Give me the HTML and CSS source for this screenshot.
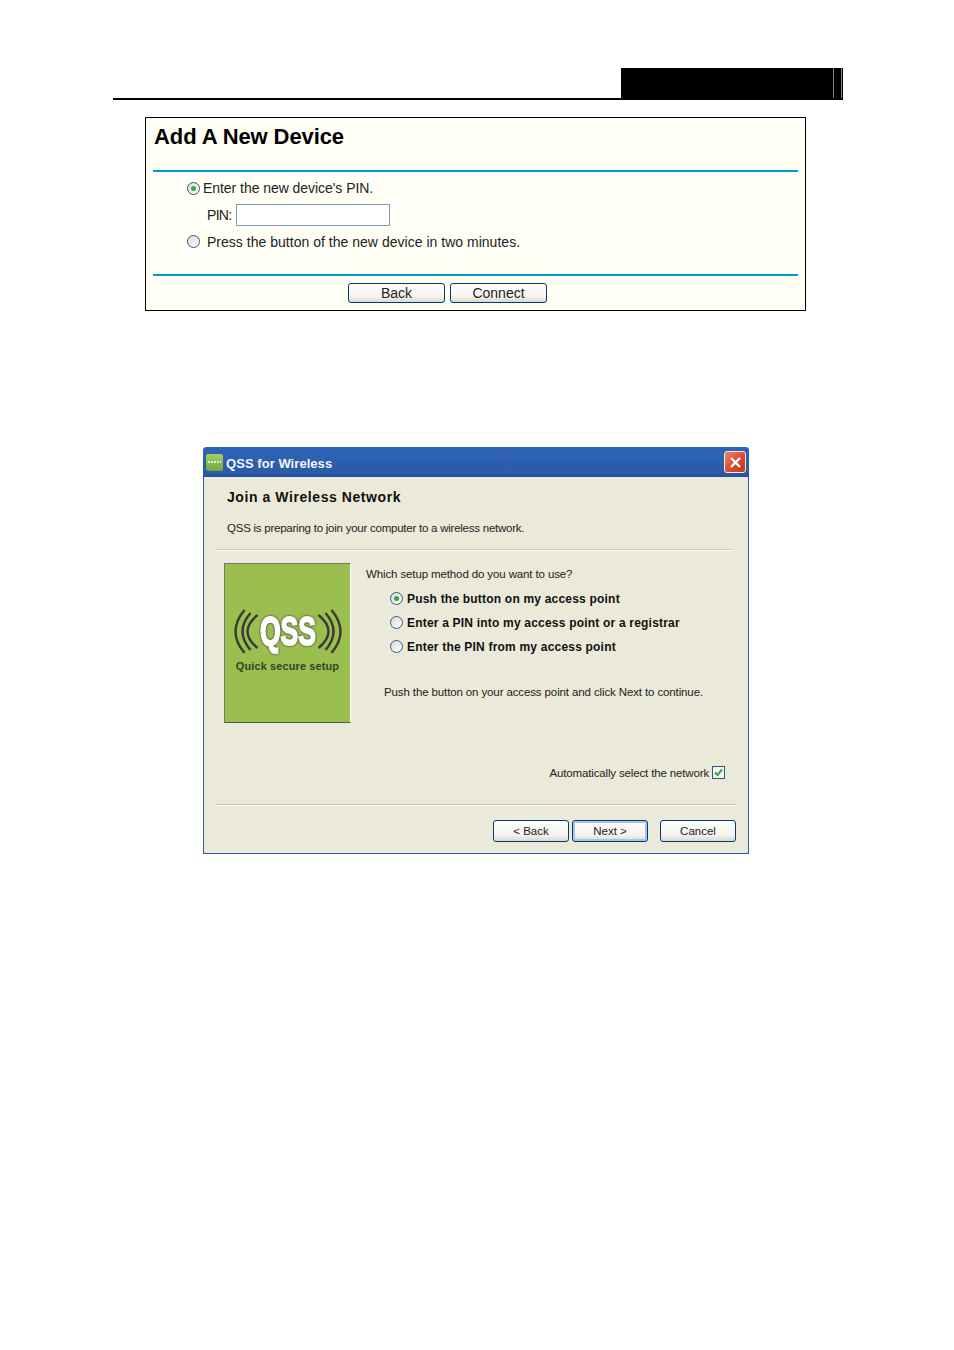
FILE: index.html
```html
<!DOCTYPE html>
<html lang="en">

<head>
    <meta charset="UTF-8">
    <title>Add A New Device</title>
    <link rel="stylesheet" href="styles.css">
</head>

<body>
    <div class="page-head">
        <div class="head-block"></div>
        <div class="head-tick"></div>
        <div class="head-end"></div>
    </div>

    <div class="router-panel">
        <h1>Add A New Device</h1>
        <div class="panel-rule"></div>
        <div class="panel-body">
            <div class="panel-row first">
                <span class="radio on"></span>
                <span class="pin-choice">Enter the new device's PIN.</span>
            </div>
            <div class="panel-row pin-row">
                <span class="pin-label">PIN:</span>
                <span class="pin-input"></span>
            </div>
            <div class="panel-row">
                <span class="radio"></span>
                <span class="press-choice">Press the button of the new device in two minutes.</span>
            </div>
        </div>
        <div class="panel-rule"></div>
        <div class="panel-buttons">
            <span class="web-btn">Back</span>
            <span class="web-btn">Connect</span>
        </div>
    </div>

    <div class="dialog">
        <div class="titlebar">
            <div class="app-icon"><span></span></div>
            <span class="title-text">QSS for Wireless</span>
            <div class="close-btn">
                <svg width="13" height="13" viewBox="0 0 13 13">
                    <path d="M2 2L11 11M11 2L2 11" stroke="#fff" stroke-width="2.4" fill="none"/>
                </svg>
            </div>
        </div>
        <div class="dialog-body">
            <h2>Join a Wireless Network</h2>
            <p class="intro">QSS is preparing to join your computer to a wireless network.</p>
            <div class="rule top-rule"></div>
            <div class="middle">
                <div class="qss-logo">
                    <svg width="124" height="48" viewBox="0 0 124 48">
                        <g fill="none" stroke="#3a3a34" stroke-width="2.4">
                            <path d="M18.5 2Q0.5 23.5 18.5 45"/>
                            <path d="M24.5 5Q8.5 23.5 24.5 42"/>
                            <path d="M31.5 7Q11.5 23.5 31.5 40"/>
                            <path d="M105.5 2Q123.5 23.5 105.5 45"/>
                            <path d="M99.5 5Q115.5 23.5 99.5 42"/>
                            <path d="M92.5 7Q112.5 23.5 92.5 40"/>
                        </g>
                        <text class="qss-word" x="62" y="37" text-anchor="middle" textLength="56" lengthAdjust="spacingAndGlyphs">QSS</text>
                    </svg>
                    <span class="qss-caption">Quick secure setup</span>
                </div>
                <div class="options">
                    <p class="question">Which setup method do you want to use?</p>
                    <div class="option"><span class="radio on"></span><span class="option-text">Push the button on my access point</span></div>
                    <div class="option"><span class="radio"></span><span class="option-text">Enter a PIN into my access point or a registrar</span></div>
                    <div class="option"><span class="radio"></span><span class="option-text">Enter the PIN from my access point</span></div>
                    <p class="hint">Push the button on your access point and click Next to continue.</p>
                </div>
            </div>
            <div class="auto-row">
                <span>Automatically select the network</span>
                <span class="checkbox">
                    <svg width="11" height="11" viewBox="0 0 11 11">
                        <path d="M2 5.5L4.5 8L9 2.5" stroke="#2fa84a" stroke-width="2" fill="none"/>
                    </svg>
                </span>
            </div>
            <div class="rule bottom-rule"></div>
            <div class="dialog-buttons">
                <span class="xp-btn">&lt; Back</span>
                <span class="xp-btn default">Next &gt;</span>
                <span class="xp-btn cancel">Cancel</span>
            </div>
        </div>
    </div>
</body>

</html>
```

FILE: styles.css
```css
html,
body {
    margin: 0;
    padding: 0;
    background-color: #fff;
    color: #000;
    font-family: "Liberation Sans", Arial, sans-serif;
}

body {
    height: 1350px;
    overflow: hidden;
}

/* page header */
.page-head {
    display: flex;
    justify-content: flex-end;
    width: 730px;
    height: 30px;
    margin: 68px 0 0 113px;
    border-bottom: 2px solid #000;
}

.head-block {
    width: 212px;
    border-right: 1px solid #808080;
    background-color: #000;
}

.head-tick {
    width: 7px;
    border-right: 1px solid #808080;
    background-color: #000;
}

.head-end {
    width: 1px;
    background-color: #000;
}

/* router web page */
.router-panel {
    box-sizing: border-box;
    width: 661px;
    height: 194px;
    margin: 17px 0 0 145px;
    padding: 0 7px;
    border: 1px solid #000;
    background-color: #fffff6;
}

.router-panel h1 {
    height: 52px;
    margin: 0;
    padding: 5px 0 0 1px;
    box-sizing: border-box;
    font-size: 22px;
    line-height: 27px;
    letter-spacing: -0.1px;
}

.panel-rule {
    height: 2px;
    background-color: #0099cc;
}

.panel-body {
    height: 102px;
    padding: 3px 0 0 34px;
    box-sizing: border-box;
    font-size: 14px;
    color: #222;
}

.panel-row {
    display: flex;
    align-items: center;
    height: 27px;
}

.panel-row.first {
    height: 26px;
}

.pin-choice {
    margin-left: 3px;
    letter-spacing: -0.05px;
}

.press-choice {
    margin-left: 7px;
    letter-spacing: 0.02px;
}

.pin-row {
    padding-left: 20px;
    gap: 5px;
}

.pin-label {
    letter-spacing: -0.7px;
}

.pin-input {
    box-sizing: border-box;
    width: 154px;
    height: 22px;
    border: 1px solid #7f9db9;
    background-color: #fff;
}

.panel-buttons {
    display: flex;
    gap: 5px;
    padding: 7px 0 0 195px;
}

.web-btn {
    box-sizing: border-box;
    width: 97px;
    height: 20px;
    border: 1px solid #003c74;
    border-radius: 3px;
    background: linear-gradient(#fff, #f4f3ee 70%, #dcd8ce);
    font-size: 14px;
    line-height: 19px;
    text-align: center;
    color: #222;
}

/* radio shared by both */
.radio {
    box-sizing: border-box;
    display: flex;
    align-items: center;
    justify-content: center;
    flex: none;
    width: 13px;
    height: 13px;
    border: 1px solid #2c5a85;
    border-radius: 50%;
    background: linear-gradient(135deg, #dcdcd4, #fff);
}

.radio.on::after {
    content: "";
    width: 5px;
    height: 5px;
    border-radius: 50%;
    background-color: #35a84a;
}

/* xp dialog */
.dialog {
    width: 546px;
    height: 407px;
    margin: 136px 0 0 203px;
    box-sizing: border-box;
    border: 1px solid #2a5bb0;
    border-top: none;
    border-radius: 4px 4px 0 0;
    background-color: #ebe9d9;
}

.titlebar {
    display: flex;
    align-items: center;
    height: 30px;
    margin: 0 -1px;
    padding: 0 3px 0 3px;
    border-radius: 4px 4px 0 0;
    background: linear-gradient(#2a62b8, #2e63b4 20%, #2b5aa8 85%, #23509c);
}

.app-icon {
    display: flex;
    align-items: center;
    justify-content: center;
    width: 17px;
    height: 17px;
    border-radius: 2px;
    background: linear-gradient(#a5cf6a, #6ea83c);
}

.app-icon span {
    width: 13px;
    height: 2px;
    background: repeating-linear-gradient(90deg, #e6efd8 0 2px, #88b455 2px 3px);
}

.title-text {
    flex: 1;
    margin-left: 3px;
    padding-top: 3px;
    color: #f2f6fb;
    font-size: 13px;
    font-weight: bold;
    letter-spacing: 0.05px;
}

.close-btn {
    display: flex;
    align-items: center;
    justify-content: center;
    box-sizing: border-box;
    width: 22px;
    height: 22px;
    border: 1px solid #f0e8e4;
    border-radius: 3px;
    background: linear-gradient(135deg, #e8866a, #d8482a 60%, #c23a1c);
}

.dialog-body {
    padding: 0 12px;
}

.dialog-body h2 {
    height: 27px;
    margin: 0;
    padding: 11px 0 0 11px;
    font-size: 14px;
    line-height: 18px;
    letter-spacing: 0.57px;
    color: #111;
}

.intro {
    margin: 6px 0 0 11px;
    font-size: 11.5px;
    line-height: 15px;
    letter-spacing: -0.24px;
    color: #222;
}

.rule {
    height: 2px;
    border-bottom: 1px solid #fff;
    background-color: #c8c6b8;
    box-sizing: border-box;
}

.top-rule {
    margin-top: 13px;
    margin-right: 4px;
}

.middle {
    display: flex;
    height: 162px;
    margin-top: 12px;
    padding-left: 8px;
}

.qss-logo {
    box-sizing: border-box;
    display: flex;
    flex-direction: column;
    align-items: center;
    width: 127px;
    height: 160px;
    padding-top: 44px;
    border: 1px solid #77776a;
    border-right-color: #fff;
    border-bottom-color: #55554c;
    background-color: #9abf4f;
}

.qss-word {
    font-family: "Liberation Sans", sans-serif;
    font-size: 40px;
    font-weight: bold;
    fill: #fff;
    stroke: #fff;
    stroke-width: 2px;
    filter: drop-shadow(0 0 1px #222);
}

.qss-caption {
    margin-top: 3px;
    font-size: 11px;
    font-weight: bold;
    line-height: 14px;
    letter-spacing: 0.1px;
    color: #3a4028;
}

.options {
    flex: 1;
    padding-left: 15px;
    font-size: 11.5px;
    color: #222;
}

.question {
    height: 17px;
    margin: 3px 0 0;
    line-height: 17px;
    letter-spacing: -0.12px;
}

.option {
    display: flex;
    align-items: center;
    gap: 4px;
    height: 24px;
    margin-left: 24px;
    font-size: 12px;
    font-weight: bold;
    letter-spacing: 0.2px;
    color: #111;
}

.option-text {
    padding-top: 2px;
}

.question + .option {
    margin-top: 3px;
}

.hint {
    height: 16px;
    margin: 26px 0 0 18px;
    line-height: 16px;
    letter-spacing: -0.12px;
}

.auto-row {
    display: flex;
    justify-content: flex-end;
    align-items: center;
    gap: 3px;
    height: 15px;
    margin-top: 40px;
    padding-right: 11px;
    font-size: 11.5px;
    letter-spacing: -0.15px;
    color: #222;
}

.checkbox {
    box-sizing: border-box;
    display: flex;
    align-items: center;
    justify-content: center;
    width: 13px;
    height: 13px;
    border: 1px solid #2c5a85;
    background-color: #f4f4ee;
}

.bottom-rule {
    margin-top: 24px;
}

.dialog-buttons {
    display: flex;
    justify-content: flex-end;
    gap: 3px;
    margin-top: 14px;
}

.xp-btn {
    box-sizing: border-box;
    width: 76px;
    height: 22px;
    border: 1px solid #003c74;
    border-radius: 3px;
    background: linear-gradient(#fff, #f4f3ee 70%, #dcd8ce);
    font-size: 11.5px;
    line-height: 20px;
    text-align: center;
    color: #222;
}

.xp-btn.default {
    box-shadow: inset 0 0 0 2px #a9c4ea;
}

.xp-btn.cancel {
    margin-left: 9px;
}
```
